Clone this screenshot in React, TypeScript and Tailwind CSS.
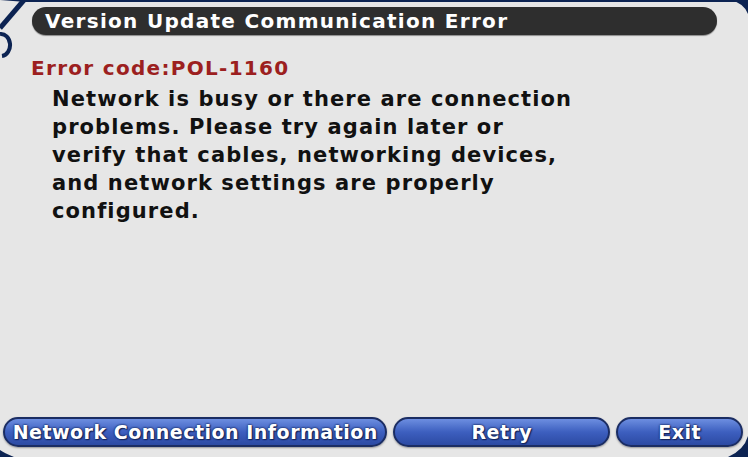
import React from "react";

const font = { fontFamily: '"DejaVu Sans", "Liberation Sans", sans-serif' };

function Frame() {
  return (
    <svg className="absolute inset-0 pointer-events-none" width="748" height="457" viewBox="0 0 748 457">
      <path d="M0 0 H748 V2 H26 Z" fill="#0c2352" />
      <path d="M24 0 L0 28" stroke="#0c2352" strokeWidth="5" fill="none" />
      <path d="M0 34 A 9 11 0 0 1 2 56" stroke="#0c2352" strokeWidth="4" fill="none" />
      <path d="M730 0 H748 V14 Q744 3 730 0 Z" fill="#0c2352" />
      <path d="M0 450 Q4 453 14 457 H0 Z" fill="#0c2352" />
      <path d="M748 436 V457 H728 Q744 450 748 436 Z" fill="#0c2352" />
    </svg>
  );
}

function Btn({ label, className }: { label: string; className: string }) {
  return (
    <div
      className={`h-[30px] rounded-full border-2 border-[#1b2d63] bg-gradient-to-b from-[#6d8ee0] via-[#3d5fbf] to-[#2c4aa3] flex items-center justify-center text-white font-bold text-[19px] tracking-[0.5px] [text-shadow:0_0_2px_#14255a,0_0_2px_#14255a,1px_1px_1px_#14255a] shadow-[0_1px_2px_rgba(0,0,0,0.35)] ${className}`}
    >
      {label}
    </div>
  );
}

export default function App() {
  return (
    <div className="relative w-[748px] h-[457px] bg-[#e6e6e6] overflow-hidden flex flex-col" style={font}>
      <Frame />
      <div className="pt-[7px] pl-[32px] pr-[31px]">
        <div className="h-[28px] rounded-full bg-[#2e2e2e] flex items-center pl-[13px] text-white font-bold text-[20px] tracking-[1.3px] shadow-[0_1px_1px_rgba(0,0,0,0.4)]">
          Version Update Communication Error
        </div>
      </div>
      <div className="pl-[31px] pt-[20px] text-[#9c1f20] font-bold text-[20px] tracking-[1.3px] leading-[26px]">
        Error code:POL-1160
      </div>
      <div className="pl-[52px] pt-[4px] text-[#111] font-bold text-[21px] tracking-[1.1px] leading-[28px]">
        Network is busy or there are connection
        <br />
        problems. Please try again later or
        <br />
        verify that cables, networking devices,
        <br />
        and network settings are properly
        <br />
        configured.
      </div>
      <div className="mt-auto mb-[10px] flex pl-[3px] pr-[5px] gap-[6px]">
        <Btn label="Network Connection Information" className="w-[385px]" />
        <Btn label="Retry" className="w-[217px]" />
        <Btn label="Exit" className="w-[127px]" />
      </div>
    </div>
  );
}
